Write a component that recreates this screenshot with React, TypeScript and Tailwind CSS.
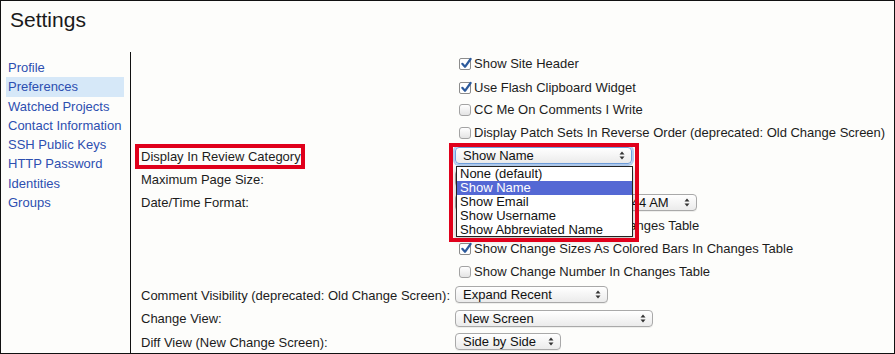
import React from 'react'

const font = { fontFamily: '"Liberation Sans", Arial, Helvetica, sans-serif' }

const navItems = [
  'Profile',
  'Preferences',
  'Watched Projects',
  'Contact Information',
  'SSH Public Keys',
  'HTTP Password',
  'Identities',
  'Groups',
]

function Arrows() {
  return (
    <svg width="6" height="9" viewBox="0 0 6 9" className="shrink-0">
      <path d="M3 0.5 L5.5 3.5 H0.5 Z" fill="#333" />
      <path d="M3 8.5 L5.5 5.5 H0.5 Z" fill="#333" />
    </svg>
  )
}

function Select({ value, width, focused }: { value: string; width: string; focused?: boolean }) {
  return (
    <div
      className={`${width} h-[17px] flex items-center justify-between pl-[7px] pr-[6px] rounded-[4px] border bg-gradient-to-b from-white to-[#ebebeb] text-[13px] leading-none text-[#111] ${
        focused
          ? 'border-[#6f9fdc] shadow-[0_0_0_2px_#b3cef0]'
          : 'border-[#a9a9a9] shadow-[0_1px_0_rgba(0,0,0,0.06)]'
      }`}
    >
      <span className="whitespace-nowrap">{value}</span>
      <Arrows />
    </div>
  )
}

function Checkbox({ checked, label }: { checked?: boolean; label: string }) {
  return (
    <div className="flex items-center pl-[4px]">
      {checked ? (
        <span className="relative w-[12px] h-[12px] rounded-[2px] border border-[#8c8c8c] bg-white">
          <svg width="13" height="13" viewBox="0 0 13 13" className="absolute left-[0px] top-[-2px]">
            <path d="M2.3 6.8 L5 9.8 L10.6 2" fill="none" stroke="#2c5a9c" strokeWidth="2.2" strokeLinecap="round" strokeLinejoin="round" />
          </svg>
        </span>
      ) : (
        <span className="w-[12px] h-[12px] rounded-[3px] border border-[#a3a3a3] bg-gradient-to-b from-white to-[#e4e4e4]" />
      )}
      <span className="ml-[3px] text-[13px] text-[#1c1c1c] whitespace-nowrap">{label}</span>
    </div>
  )
}

function Row({ h, label, children }: { h: string; label?: string; children?: React.ReactNode }) {
  return (
    <div className={`${h} flex items-center`}>
      <div className="w-[314px] shrink-0 text-[13px] text-[#1c1c1c] pt-[2px] whitespace-nowrap">{label}</div>
      <div className="flex items-center gap-[4px]">{children}</div>
    </div>
  )
}

export default function App() {
  return (
    <div style={font} className="relative w-[895px] h-[354px] border border-[#111] bg-[#fdfdfb] flex flex-col overflow-hidden">
      <div className="h-[51px] shrink-0 pl-[9px] pt-[7px]">
        <h1 className="text-[21px] leading-[24px] text-[#1a1a1a]">Settings</h1>
      </div>

      <div className="flex flex-1">
        {/* Sidebar */}
        <div className="w-[130px] shrink-0 border-r border-[#111] pl-[5px] pt-[6px]">
          {navItems.map((item) => (
            <div
              key={item}
              className={`w-[118px] h-[19.3px] pl-[2px] flex items-center text-[13px] text-[#2d4fb0] ${
                item === 'Preferences' ? 'bg-[#d6e8f8]' : ''
              }`}
            >
              {item}
            </div>
          ))}
        </div>

        {/* Preferences form */}
        <div className="flex-1 pl-[10px]">
          <Row h="h-[24px]">
            <Checkbox checked label="Show Site Header" />
          </Row>
          <Row h="h-[23px]">
            <Checkbox checked label="Use Flash Clipboard Widget" />
          </Row>
          <Row h="h-[22px]">
            <Checkbox label="CC Me On Comments I Write" />
          </Row>
          <Row h="h-[23px]">
            <Checkbox label="Display Patch Sets In Reverse Order (deprecated: Old Change Screen)" />
          </Row>
          <Row h="h-[23px]" label="Display In Review Category">
            <Select value="Show Name" width="w-[177px]" focused />
          </Row>
          <Row h="h-[23px]" label="Maximum Page Size:">
            <Select value="25 rows per page" width="w-[130px]" />
          </Row>
          <Row h="h-[24px]" label="Date/Time Format:">
            <Select value="Std. Jun 3, 2013" width="w-[154px]" />
            <Select value="4:44 AM" width="w-[84px]" />
          </Row>
          <Row h="h-[23px]">
            <Checkbox checked label="Show Relative Dates In Changes Table" />
          </Row>
          <Row h="h-[23px]">
            <Checkbox checked label="Show Change Sizes As Colored Bars In Changes Table" />
          </Row>
          <Row h="h-[23px]">
            <Checkbox label="Show Change Number In Changes Table" />
          </Row>
          <Row h="h-[23px]" label="Comment Visibility (deprecated: Old Change Screen):">
            <Select value="Expand Recent" width="w-[153px]" />
          </Row>
          <Row h="h-[24px]" label="Change View:">
            <Select value="New Screen" width="w-[198px]" />
          </Row>
          <Row h="h-[23px]" label="Diff View (New Change Screen):">
            <Select value="Side by Side" width="w-[106px]" />
          </Row>
        </div>
      </div>

      {/* open dropdown list */}
      <div className="absolute left-[455px] top-[165px] w-[177px] h-[71px] bg-white border border-[#222] shadow-[0_3px_6px_rgba(0,0,0,0.25)] text-[13px] text-[#111] py-[0px]">
        {['None (default)', 'Show Name', 'Show Email', 'Show Username', 'Show Abbreviated Name'].map((opt) => (
          <div
            key={opt}
            className={`h-[14px] leading-[14px] pl-[3px] whitespace-nowrap ${
              opt === 'Show Name' ? 'bg-[#5468d4] text-white' : ''
            }`}
          >
            {opt}
          </div>
        ))}
      </div>

      {/* annotation boxes */}
      <div className="absolute left-[134px] top-[143px] w-[170px] h-[25px] border-[4px] border-[#e0001b]" />
      <div className="absolute left-[448px] top-[142px] w-[190px] h-[99px] border-[4px] border-[#e0001b]" />
    </div>
  )
}
